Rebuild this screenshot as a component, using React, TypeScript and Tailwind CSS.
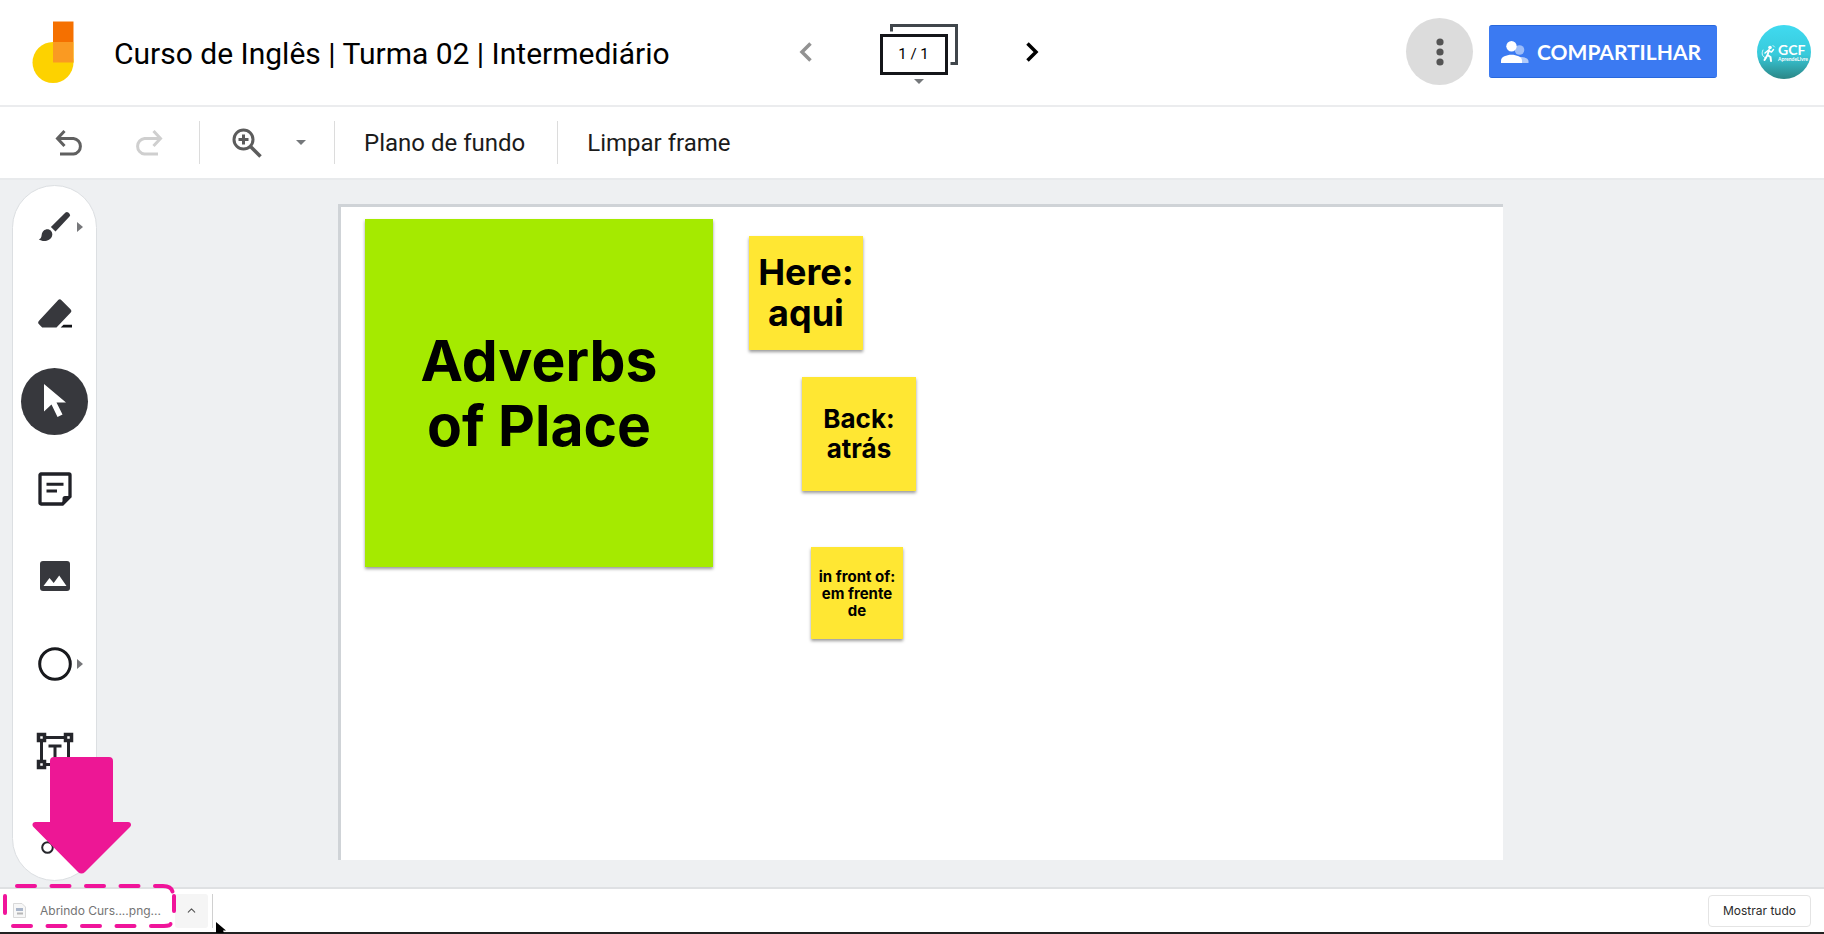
import type { ReactNode } from 'react'
import { ChevronUp, X } from 'lucide-react'

interface Note {
  lines: string[]
  className: string
}

const notes: Note[] = [
  {
    lines: ['Adverbs', 'of Place'],
    className: 'left-[24px] top-[12px] size-[348px] bg-[#a5ea00] text-[57px] leading-[65px]',
  },
  {
    lines: ['Here:', 'aqui'],
    className: 'left-[408px] top-[29px] size-[114px] bg-[#ffe733] text-[36px] leading-[41px]',
  },
  {
    lines: ['Back:', 'atrás'],
    className: 'left-[461px] top-[170px] size-[114px] bg-[#ffe733] text-[26px] leading-[30px]',
  },
  {
    lines: ['in front of:', 'em frente', 'de'],
    className: 'left-[470px] top-[340px] size-[92px] bg-[#ffe733] text-[15px] leading-[17px]',
  },
]

const Logo = () => (
  <svg className="h-[66px] w-[54px]" viewBox="0 0 54 66" aria-hidden="true">
    <circle cx="27" cy="43.5" r="20.5" fill="#fdd200" />
    <path d="M27 43.5h20.5V23H27z" fill="#fdd200" />
    <path d="M27 2.500h20.500V23H27z" fill="#f57000" />
    <path d="M27 23h20.500v20.500H27z" fill="#fa9a22" />
  </svg>
)

const UndoIcon = ({ className }: { className: string }) => (
  <svg className={className} viewBox="0 0 28 26" fill="none" stroke="currentColor" strokeWidth="3" aria-hidden="true">
    <path d="M9.500 1 2.500 8.500l7 7.500M3 8.500h15.500a7.800 7.800 0 0 1 0 15.500H5" />
  </svg>
)

const ZoomIcon = () => (
  <svg className="size-[30px]" viewBox="0 0 30 30" fill="none" stroke="currentColor" strokeWidth="3" aria-hidden="true">
    <circle cx="11.500" cy="11.500" r="9.500" />
    <path d="m18.500 18.500 10 10" strokeWidth="3.500" />
    <path d="M11.500 6.500v10M6.500 11.500h10" strokeWidth="3" />
  </svg>
)

const Avatar = () => (
  <svg className="size-[54px]" viewBox="0 0 54 54" aria-hidden="true">
    <defs>
      <linearGradient id="avatar" x1="0" y1="0" x2="0" y2="1">
        <stop offset="0" stopColor="#40daf0" />
        <stop offset=".55" stopColor="#38cadb" />
        <stop offset="1" stopColor="#2b8686" />
      </linearGradient>
    </defs>
    <circle cx="27" cy="27" r="27" fill="url(#avatar)" />
    <circle cx="13" cy="22.500" r="1.800" fill="#fff" />
    <g fill="none" stroke="#fff" strokeLinecap="round" strokeLinejoin="round">
      <path d="m12 25-1.500 5 3 2 .5 4M10.500 30l-3 5" strokeWidth="2" />
      <path d="m8 28 3-2.500 3.500 1.500 2-2.500" strokeWidth="1.500" />
      <path d="M6 25c-2 4-.5 7 3 8M16 20.500l1.500 1.500" strokeWidth=".8" />
    </g>
    <text x="21" y="30" fill="#fff" fontFamily="Lato, sans-serif" fontWeight="700" fontSize="14">GCF</text>
    <text x="21" y="36" fill="#fff" fontFamily="Lato, sans-serif" fontWeight="700" fontSize="5">AprendeLivre</text>
  </svg>
)

const BrushIcon = () => (
  <svg className="h-[32px] w-[34px]" viewBox="0 0 34 32" fill="#37383d" aria-hidden="true">
    <path d="M27.500 1.600a2 2 0 0 1 2.800 0l1.200 1.200a2 2 0 0 1 0 2.800L17.500 20.600l-4.600-4.600z" />
    <path d="M11 18.500a5.300 5.300 0 0 1 3 6.800C12.500 30 5 31.600.8 28.300c2.300-.4 2.500-2 2.900-4.500.6-4 3.700-6.200 7.300-5.300z" />
  </svg>
)

const EraserIcon = () => (
  <svg className="h-[32px] w-[34px]" viewBox="0 0 34 32" fill="#37383d" aria-hidden="true">
    <path d="M20 2.200a2.500 2.500 0 0 1 3.500 0l9 9a2.500 2.500 0 0 1 0 3.500L18.500 29.500H4.200L1 26.200a2.500 2.500 0 0 1 0-3.500z" />
    <path d="M25.500 26.700h8.500v2.800H22.700z" fill="#111216" />
  </svg>
)

const CursorIcon = () => (
  <svg className="h-[34px] w-[24px]" viewBox="0 0 24 34" fill="#fff" aria-hidden="true">
    <path d="M1 0v27.500l7.500-7 6 12.500 5-2.400-6-12.100H23z" />
  </svg>
)

const NoteIcon = () => (
  <svg className="size-[34px]" viewBox="0 0 34 34" fill="none" stroke="#202127" aria-hidden="true">
    <path d="M3 2h28a1 1 0 0 1 1 1v21.500L24.500 32H3a1 1 0 0 1-1-1V3a1 1 0 0 1 1-1z" strokeWidth="3.300" />
    <path d="M8.500 12.200h17M8.500 19h10.500" strokeWidth="3" />
    <path d="M33 24h-6a2.500 2.500 0 0 0-2.500 2.500V33z" fill="#202127" stroke="none" />
  </svg>
)

const ImageIcon = () => (
  <svg className="size-[30px]" viewBox="0 0 30 30" aria-hidden="true">
    <rect width="30" height="30" rx="3" fill="#37383d" />
    <path d="m3.500 25 6-8 4.200 5 5.500-7.500L26.500 25z" fill="#fff" />
  </svg>
)

const ShapeIcon = () => (
  <svg className="size-[34px]" viewBox="0 0 34 34" aria-hidden="true">
    <circle cx="17" cy="17" r="15.300" fill="none" stroke="#18191d" strokeWidth="3" />
  </svg>
)

const TextBoxIcon = () => (
  <svg className="size-[38px]" viewBox="0 0 38 38" fill="none" stroke="#25262b" strokeWidth="3" aria-hidden="true">
    <path d="M10 5.500h18M10 32.500h18M5.500 10v18M32.500 10v18" />
    <path d="M2.500 2.500h6v6h-6zM29.500 2.500h6v6h-6zM2.500 29.500h6v6h-6zM29.500 29.500h6v6h-6z" strokeWidth="3.500" />
    <path d="M12.500 14h13M19 14v13" />
  </svg>
)

const LaserIcon = () => (
  <svg className="size-[34px]" viewBox="0 0 34 34" fill="none" stroke="#25262b" strokeWidth="2.500" aria-hidden="true">
    <circle cx="9.500" cy="26.500" r="5.300" strokeWidth="2" />
    <path d="m13.500 22 14-14M5 12.500l5 3" strokeLinecap="round" />
  </svg>
)

interface ToolProps {
  label: string
  children: ReactNode
  active?: boolean
  more?: boolean
}

const Tool = ({ label, children, active, more }: ToolProps) => (
  <button
    aria-label={label}
    aria-pressed={active}
    className={`relative flex size-[67px] shrink-0 items-center justify-center rounded-full ${active ? 'bg-[#37383d]' : ''}`}
  >
    {children}
    {more && (
      <svg className="absolute right-[5px] h-[10px] w-[6px]" viewBox="0 0 6 10" fill="#76777a" aria-hidden="true">
        <path d="m0 0 6 5-6 5z" />
      </svg>
    )}
  </button>
)

const Caret = () => (
  <svg className="h-[5px] w-[10px]" viewBox="0 0 10 5" fill="#75787b" aria-hidden="true">
    <path d="M0 0h10L5 5z" />
  </svg>
)

const Header = () => (
  <header className="grid h-[107px] grid-cols-[1fr_auto_1fr] items-center border-b-2 border-[#ebecee] pr-[13px] pb-[2px] pl-[26px]">
    <div className="flex items-center">
      <Logo />
      <h1 className="mt-1 ml-[34px] text-[30px] leading-[36px] whitespace-nowrap">
        Curso de Inglês | Turma 02 | Intermediário
      </h1>
    </div>

    <nav className="flex items-center gap-[68px]" aria-label="Frames">
      <button aria-label="Frame anterior" className="text-[#929292]">
        <svg className="h-[20px] w-[13px]" viewBox="0 0 13 20" fill="none" stroke="currentColor" strokeWidth="3.500" aria-hidden="true">
          <path d="m11.500 1.500-8.500 8.500 8.500 8.500" />
        </svg>
      </button>
      <button className="relative mt-1 flex h-[60px] w-[78px] items-end justify-start pb-[9px]">
        <svg className="absolute top-0 right-0 h-[42px] w-[68px]" viewBox="0 0 68 42" fill="none" stroke="#40464b" strokeWidth="3" aria-hidden="true">
          <path d="M1.500 7.500v-6h65v38h-6" />
        </svg>
        <span className="flex h-[41px] w-[68px] items-center justify-center border-3 border-[#141519] bg-white text-[15px] leading-[20px]">
          1 / 1
        </span>
        <span className="absolute bottom-0 left-[34px]">
          <Caret />
        </span>
      </button>
      <button aria-label="Próximo frame">
        <svg className="h-[20px] w-[13px]" viewBox="0 0 13 20" fill="none" stroke="currentColor" strokeWidth="3.500" aria-hidden="true">
          <path d="m1.500 1.500 8.500 8.500-8.500 8.500" />
        </svg>
      </button>
    </nav>

    <div className="flex items-center justify-end">
      <button aria-label="Mais ações" className="flex size-[67px] items-center justify-center rounded-full bg-[#dcdcdc]">
        <svg className="h-[28px] w-[8px]" viewBox="0 0 8 28" fill="#555" aria-hidden="true">
          <circle cx="4" cy="4" r="3.600" />
          <circle cx="4" cy="14" r="3.600" />
          <circle cx="4" cy="24" r="3.600" />
        </svg>
      </button>
      <button className="ml-4 flex h-[53px] w-[228px] items-center gap-2 rounded-[3px] border-y border-[#2868dd] bg-[#3b7af2] pl-3 font-[Lato] text-[21px] leading-[28px] font-bold text-white">
        <svg className="h-[22px] w-[28px] shrink-0" viewBox="0 0 28 22" fill="#fff" aria-hidden="true">
          <circle cx="18.500" cy="9" r="4.800" opacity=".5" />
          <path d="M19 22h8.500v-2c0-2.500-4-4-8.500-4z" opacity=".6" />
          <circle cx="10.500" cy="5.200" r="5.200" />
          <path d="M0 22v-2.500C0 16 5.500 13.800 10.500 13.800s10.500 2.200 10.500 5.700V22z" />
        </svg>
        COMPARTILHAR
      </button>
      <button aria-label="Conta" className="ml-10">
        <Avatar />
      </button>
    </div>
  </header>
)

const Toolbar = () => (
  <div className="flex h-[73px] items-center border-b-2 border-[#e8eaec] pl-[55px] text-2xl text-[#1b1b1b]">
    <button aria-label="Desfazer" className="text-[#606060]">
      <UndoIcon className="h-[26px] w-[28px]" />
    </button>
    <button aria-label="Refazer" disabled className="ml-[52px] text-[#cfcfcf]">
      <UndoIcon className="h-[26px] w-[28px] -scale-x-100" />
    </button>
    <div className="ml-9 flex h-[43px] items-center gap-[34px] border-l border-[#dcdcdc] pr-7 pl-8 text-[#5c5c5c]">
      <button aria-label="Zoom">
        <ZoomIcon />
      </button>
      <button aria-label="Opções de zoom">
        <Caret />
      </button>
    </div>
    <button className="h-[43px] border-l border-[#dcdcdc] pr-8 pl-[29px]">Plano de fundo</button>
    <button className="h-[43px] border-l border-[#dcdcdc] pr-8 pl-[29px]">Limpar frame</button>
  </div>
)

const Sidebar = () => (
  <aside className="mt-[5px] mb-[6px] ml-3 flex w-[85px] shrink-0 flex-col items-center justify-between rounded-full border border-[#dcdfe2] bg-white pt-[7px] pb-[8px]">
    <Tool label="Caneta" more><BrushIcon /></Tool>
    <Tool label="Apagar"><EraserIcon /></Tool>
    <Tool label="Selecionar" active><CursorIcon /></Tool>
    <Tool label="Nota adesiva"><NoteIcon /></Tool>
    <Tool label="Imagem"><ImageIcon /></Tool>
    <Tool label="Forma" more><ShapeIcon /></Tool>
    <Tool label="Caixa de texto"><TextBoxIcon /></Tool>
    <Tool label="Laser"><LaserIcon /></Tool>
  </aside>
)

const DownloadBar = () => (
  <footer className="flex h-[47px] items-center border-t-2 border-b-2 border-[#dfe1e3] border-b-[#222] bg-white font-[Inter]">
    <div className="relative flex h-full w-[175px] items-center pl-[13px] text-[12px] leading-[16px] text-[#747474]">
      <svg className="mr-[14px] h-[15px] w-[13px] shrink-0" viewBox="0 0 13 15" aria-hidden="true">
        <path d="M.5.500h8.500l3.500 3.500v10.500H.5z" fill="#f7f7f7" stroke="#d9d9d9" />
        <path d="M3 5h7v3H3z" fill="#a9b5c9" />
        <path d="M4 9.500h6v2H4z" fill="#b7b7b7" />
      </svg>
      <span className="whitespace-nowrap">Abrindo Curs....png...</span>
      {/* highlight around the finished download */}
      <svg className="absolute -top-[6px] left-[3px] h-[46px] w-[173px]" viewBox="0 0 173 46" fill="none" stroke="#f0149a" strokeWidth="4" strokeLinecap="round" aria-hidden="true">
        <path d="M14 3h18M48.500 3h18M83 3h18M117.500 3h18M152 3h8q8 0 9.500 5.500M171 13v15M2 13v17M10 43h18M44.500 43h18M79 43h18M113.500 43h18M148 43h13q6 0 6.500-2" />
      </svg>
      <svg className="absolute bottom-[58px] left-[32px] h-[118px] w-[100px]" viewBox="0 0 100 118" fill="#ed1795" aria-hidden="true">
        <path d="M22 1h55a4 4 0 0 1 4 4v61h15c3 0 4 3 2 5L53 116q-3.500 3-7 0L1.500 71c-2-2-1-5 2-5H18V5a4 4 0 0 1 4-4z" />
      </svg>
    </div>
    <button aria-label="Opções do download" className="flex h-[34px] w-[33px] items-center justify-center rounded-[3px] bg-[#f5f5f5] text-[#555]">
      <ChevronUp size={13} />
    </button>
    <div className="relative ml-1 h-[34px] border-l border-[#d0d0d0]">
      <svg className="absolute top-[28px] left-[3px] h-[11px] w-[10px]" viewBox="0 0 10 11" aria-hidden="true">
        <path d="M0 0v11h8l-1-2.500h3z" />
      </svg>
    </div>
    <button className="ml-auto h-[32px] w-[103px] rounded-[4px] border border-[#e4e4e4] text-[12px] leading-[16px] text-[#2b2b2b]">
      Mostrar tudo
    </button>
    <button aria-label="Fechar" className="ml-[11px] w-[2px] overflow-hidden text-[#888]">
      <X size={11} />
    </button>
  </footer>
)

export default function App() {
  return (
    <div className="flex min-h-screen flex-col overflow-hidden bg-white font-[Roboto] text-black">
      <Header />
      <Toolbar />
      <main className="flex flex-1 bg-[#eef0f2]">
        <Sidebar />
        <section
          aria-label="Quadro"
          className="relative mt-[24px] mr-[321px] mb-[27px] ml-[241px] min-h-[600px] flex-1 border-t-3 border-l-3 border-[#cfd3d7] bg-white font-[Inter] font-bold"
        >
          {notes.map((note) => (
            <div
              key={note.lines[0]}
              className={`absolute flex flex-col items-center justify-center whitespace-nowrap shadow-[0_2px_3px_rgba(0,0,0,0.4)] ${note.className}`}
            >
              {note.lines.map((line) => (
                <p key={line}>{line}</p>
              ))}
            </div>
          ))}
        </section>
      </main>
      <DownloadBar />
    </div>
  )
}
